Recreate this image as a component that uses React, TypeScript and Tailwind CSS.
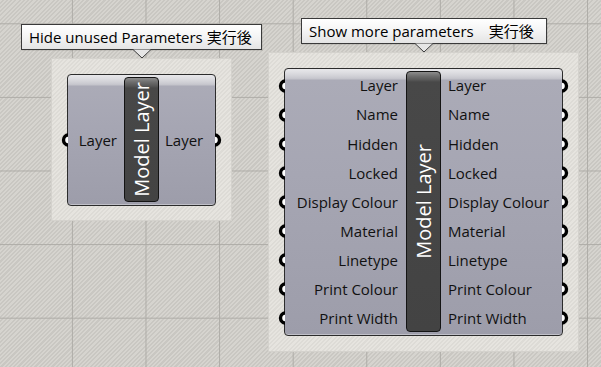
import React from 'react';

const FONT = "font-['Open_Sans','Noto_Sans_CJK_JP',sans-serif]";

const Tooltip: React.FC<{ text: string; className: string; tipClass: string }> = ({ text, className, tipClass }) => (
  <div className={`absolute ${className}`}>
    <div className="h-[26px] flex items-center px-[7px] border border-[#3a3a3a] bg-[linear-gradient(180deg,#ffffff_0%,#f4f4f4_50%,#e4e4e4_100%)] text-[15px] text-black whitespace-nowrap shadow-[1px_1px_0_rgba(0,0,0,0.08)]">
      {text}
    </div>
    <svg className={`absolute top-[25px] ${tipClass}`} width="18" height="10" viewBox="0 0 18 10">
      <path d="M0 0.5 L9 9 L18 0.5" fill="#e6e6e6" stroke="#3a3a3a" strokeWidth="1" />
    </svg>
  </div>
);

// grasshopper parameter grips: a ring half hidden under the component edge
const InPort = () => (
  <svg className="absolute left-[-8px] top-1/2 -translate-y-1/2" width="8" height="15" viewBox="0 0 8 15">
    <circle cx="8.5" cy="7.5" r="5" fill="#ffffff" stroke="#000000" strokeWidth="3.4" />
  </svg>
);

const OutPort = () => (
  <svg className="absolute right-[-8px] top-1/2 -translate-y-1/2" width="8" height="15" viewBox="0 0 8 15">
    <circle cx="-0.5" cy="7.5" r="5" fill="#ffffff" stroke="#000000" strokeWidth="3.4" />
  </svg>
);

const Bar: React.FC<{ text: string }> = ({ text }) => (
  <div className="w-[35px] mt-[2px] mb-[3px] rounded-[4px] border border-[#141414] bg-[linear-gradient(180deg,#8c8c8c_0px,#6e6e6e_4px,#575757_8px,#484848_10px,#434343_100%)] flex items-center justify-center overflow-hidden">
    <span className="[writing-mode:vertical-rl] rotate-180 text-white text-[20px] leading-none whitespace-nowrap">{text}</span>
  </div>
);

const shell =
  'flex rounded-[4px] border border-[#2c2c2c] bg-[linear-gradient(180deg,#e8e8eb_0px,#dcdce0_4px,#cdcdd3_8px,#c3c3ca_10px,#ababb7_11px,#a6a6b3_40%,#9d9daa_100%)] shadow-[inset_0_-1px_0_#c0c0c8]';

const params = ['Layer', 'Name', 'Hidden', 'Locked', 'Display Colour', 'Material', 'Linetype', 'Print Colour', 'Print Width'];

const groupBg =
  'bg-[#e3e1dc] bg-[repeating-linear-gradient(135deg,#e6e4df_0px,#e6e4df_1.5px,#dddbd6_1.5px,#dddbd6_3px)] border border-[#d4d2cd]';

export default function App() {
  return (
    <div className={`relative w-[601px] h-[367px] overflow-hidden ${FONT} bg-[#d2d0cb] bg-[repeating-linear-gradient(135deg,#d6d4cf_0px,#d6d4cf_1.5px,#c9c7c2_1.5px,#c9c7c2_3px)]`}>
      {/* canvas grid */}
      <div className="absolute inset-0 bg-[linear-gradient(to_right,#aeaca7_1px,transparent_1px),linear-gradient(to_bottom,#aeaca7_1px,transparent_1px)] bg-[length:73.6px_73.6px] bg-[position:71.9px_23.3px]" />

      {/* group 1 */}
      <div className={`absolute left-[51px] top-[58px] w-[181px] h-[163px] p-[15px] pb-[14px] ${groupBg}`}>
        <div className={`${shell} h-full`}>
          <div className="relative w-[56px] flex items-center justify-end pr-[7px] text-[15px] text-[#111]">
            <InPort />
            Layer
          </div>
          <Bar text="Model Layer" />
          <div className="relative flex-1 flex items-center pl-[6px] text-[15px] text-[#111]">
            <OutPort />
            Layer
          </div>
        </div>
      </div>
      <Tooltip text="Hide unused Parameters 実行後" className="left-[21px] top-[24px] w-[241px]" tipClass="left-[112px]" />

      {/* group 2 */}
      <div className={`absolute left-[268px] top-[52px] w-[311px] h-[300px] p-[15px] ${groupBg}`}>
        <div className={`${shell} h-full`}>
          <div className="w-[121px] flex flex-col py-[2px]">
            {params.map((p) => (
              <div key={p} className="relative flex-1 flex items-center justify-end pr-[8px] text-[15px] text-[#111] whitespace-nowrap">
                <InPort />
                {p}
              </div>
            ))}
          </div>
          <Bar text="Model Layer" />
          <div className="flex-1 flex flex-col py-[2px]">
            {params.map((p) => (
              <div key={p} className="relative flex-1 flex items-center pl-[7px] text-[15px] text-[#111] whitespace-nowrap">
                <OutPort />
                {p}
              </div>
            ))}
          </div>
        </div>
      </div>
      <Tooltip text="Show more parameters　実行後" className="left-[301px] top-[18px] w-[246px]" tipClass="left-[114px]" />
    </div>
  );
}
